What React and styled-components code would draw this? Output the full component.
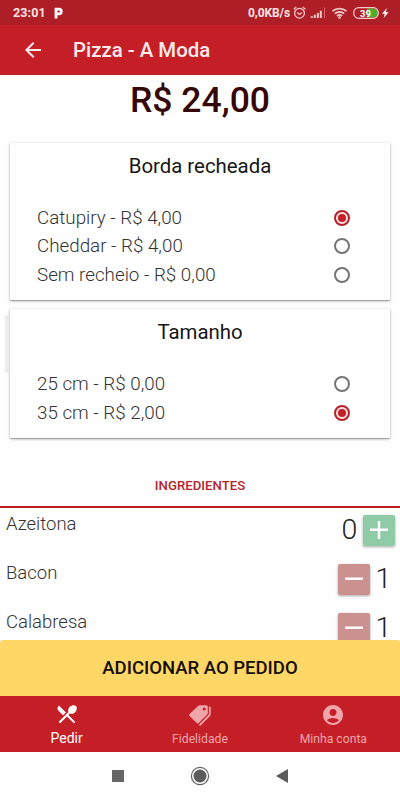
import styled, { createGlobalStyle } from "styled-components";
import { MdAccountCircle, MdArrowBack, MdLocalDining } from "react-icons/md";

const GlobalStyle = createGlobalStyle`
	* {
		box-sizing: border-box;
	}

	body {
		margin: 0;
		background-color: #fefefe;
		font-family: Roboto, "Liberation Sans", sans-serif;
	}

	h1, h2, p {
		margin: 0;
	}

	button {
		border: none;
		padding: 0;
		font-family: inherit;
	}
`;

const Container = styled.div`
	width: 400px;
	height: 800px;
	display: flex;
	flex-direction: column;
	overflow: hidden;
	background-color: #fefefe;
`;

const StatusBar = styled.div`
	height: 25px;
	flex-shrink: 0;
	display: flex;
	align-items: center;
	padding: 0 10px 0 13px;
	background-color: #ae1e26;
	color: #fbe3e3;
`;

const Clock = styled.span`
	width: 41px;
	font-size: 12.5px;
	font-weight: 700;
	letter-spacing: 0.1px;
`;

const Speed = styled.span`
	margin-left: auto;
	margin-right: 3px;
	font-size: 12px;
	font-weight: 700;
	letter-spacing: -0.1px;
`;

const StatusIcons = styled.div`
	width: 97px;
	height: 16px;
	display: flex;
`;

const Header = styled.header`
	height: 50px;
	flex-shrink: 0;
	display: flex;
	align-items: center;
	padding-left: 21px;
	background-color: #c41f27;
	color: #fcebeb;
`;

const Title = styled.h1`
	margin-left: 28px;
	font-size: 20.4px;
	font-weight: 500;
`;

const Content = styled.main`
	flex: 1;
	min-height: 0;
	overflow: hidden;
	display: flex;
	flex-direction: column;
`;

const Price = styled.p`
	height: 68px;
	flex-shrink: 0;
	padding-top: 4px;
	text-align: center;
	font-size: 35.5px;
	line-height: 42px;
	font-weight: 500;
	color: #350606;
`;

const Card = styled.section`
	position: relative;
	height: ${(props) => props.$height}px;
	flex-shrink: 0;
	margin: 0 10px 9px;
	padding: ${(props) => props.$top}px 40px 0 27px;
	border-radius: 1px;
	background-color: #fff;
	box-shadow: 0 1px 3px rgba(0, 0, 0, 0.35), 0 1px 1px rgba(0, 0, 0, 0.18);
`;

const Peek = styled.div`
	position: absolute;
	left: -5px;
	top: 6px;
	width: 4px;
	height: 58px;
	background-color: #ececec;
`;

const CardTitle = styled.h2`
	height: 52px;
	margin-right: -13px;
	text-align: center;
	font-size: 20.4px;
	line-height: 29px;
	font-weight: 400;
	color: #161616;
`;

const Option = styled.label`
	height: 28.5px;
	display: flex;
	align-items: center;
	justify-content: space-between;
	font-size: 18.8px;
	font-weight: 300;
	color: #333;
`;

const Radio = styled.span`
	width: 16px;
	height: 16px;
	display: flex;
	align-items: center;
	justify-content: center;
	border: 2px solid ${(props) => (props.$checked ? "#b5202b" : "#757575")};
	border-radius: 50%;
	background-color: ${(props) => (props.$checked ? "#fbe4e0" : "transparent")};

	&::after {
		content: "";
		width: 8px;
		height: 8px;
		border-radius: 50%;
		background-color: ${(props) => (props.$checked ? "#c41f2b" : "transparent")};
	}
`;

const Tab = styled.div`
	height: 61px;
	flex-shrink: 0;
	display: flex;
	justify-content: center;
	padding-top: 30px;
	border-bottom: 2px solid #bd1c25;
	font-size: 13.2px;
	line-height: 17px;
	font-weight: 500;
	color: #b8242d;
`;

const Ingredient = styled.div`
	height: 49px;
	flex-shrink: 0;
	display: flex;
	justify-content: space-between;
	padding: 6px 5px 0 6px;
`;

const Name = styled.span`
	font-size: 18.5px;
	line-height: 20px;
	font-weight: 300;
	color: #333;
`;

const Counter = styled.div`
	height: 32px;
	display: flex;
	align-items: center;
`;

const Amount = styled.span`
	width: 25px;
	margin-right: ${(props) => (props.$before ? "1px" : 0)};
	padding-left: ${(props) => (props.$before ? 0 : "2px")};
	text-align: center;
	font-size: 28.5px;
	line-height: 32px;
	font-weight: 300;
	color: #222;
`;

const Step = styled.button`
	width: 32px;
	height: 31px;
	display: flex;
	align-items: center;
	justify-content: center;
	border-radius: 2px;
	background-color: ${(props) => (props.$add ? "#90cba8" : "#cb9090")};
	box-shadow: 0 1px 3px rgba(0, 0, 0, 0.35);
`;

const AddButton = styled.button`
	height: 56px;
	flex-shrink: 0;
	border-radius: 3px 3px 0 0;
	background-color: #fed766;
	font-size: 18.5px;
	font-weight: 500;
	color: #120d05;
`;

const BottomNav = styled.nav`
	height: 56px;
	flex-shrink: 0;
	display: flex;
	background-color: #c41f27;
`;

const NavItem = styled.div`
	flex: 1;
	display: flex;
	flex-direction: column;
	align-items: center;
	padding-top: ${(props) => (props.$active ? "6px" : "7px")};
	font-size: ${(props) => (props.$active ? "14px" : "12.2px")};
	line-height: 16px;
	color: ${(props) => (props.$active ? "#fff" : "#f0a5aa")};

	svg {
		flex-shrink: 0;
		margin-bottom: 4px;
	}
`;

const SystemNav = styled.div`
	height: 48px;
	flex-shrink: 0;
	display: flex;
	align-items: center;
	justify-content: center;
	gap: 66px;
	padding-right: 1px;
	background-color: #fefefe;
`;

const crusts = [
	{ label: "Catupiry - R$ 4,00", checked: true },
	{ label: "Cheddar - R$ 4,00", checked: false },
	{ label: "Sem recheio - R$ 0,00", checked: false },
];

const sizes = [
	{ label: "25 cm - R$ 0,00", checked: false },
	{ label: "35 cm - R$ 2,00", checked: true },
];

const ingredients = [
	{ name: "Azeitona", amount: 0 },
	{ name: "Bacon", amount: 1 },
	{ name: "Calabresa", amount: 1 },
];

const Options = ({ items }) =>
	items.map((item) => (
		<Option key={item.label}>
			{item.label}
			<Radio $checked={item.checked} />
		</Option>
	));

const StepIcon = ({ add }) => (
	<svg width="18" height="18" viewBox="0 0 18 18" stroke="#fff" strokeWidth="2.4">
		<path d={add ? "M0 8.7h18M9 0v18" : "M0 8.7h18"} />
	</svg>
);

const TagsIcon = () => (
	<svg width="24" height="24" viewBox="0 0 24 24">
		<path
			d="M11.8 2.2h6.4a1.6 1.6 0 0 1 1.6 1.6v6.3a2 2 0 0 1-.6 1.4l-8.4 8.6a1.5 1.5 0 0 1-2.1 0L1.6 13a1.5 1.5 0 0 1 0-2.1l8.7-8.1a2.3 2.3 0 0 1 1.5-.6z"
			fill="currentColor"
		/>
		<circle cx="16.2" cy="6" r="1.6" fill="#c41f27" />
		<path
			d="M21.8 4.4v6.7a2 2 0 0 1-.6 1.4L12 21.8"
			fill="none"
			stroke="currentColor"
			strokeWidth="1.8"
			strokeLinecap="round"
		/>
	</svg>
);

const App = () => {
	return (
		<>
			<GlobalStyle />
			<Container>
				<StatusBar>
					<Clock>23:01</Clock>
					<svg width="9" height="12" viewBox="0 0 9 12" fill="none">
						<path
							d="M2 11.5V2.2h3a2.2 2.2 0 0 1 0 4.6H2"
							stroke="#fff"
							strokeWidth="2.8"
						/>
					</svg>
					<Speed>0,0KB/s</Speed>
					<StatusIcons>
						<svg width="97" height="16" viewBox="0 0 97 16" fill="none" stroke="#f6c9cb">
							<circle cx="6.5" cy="8.2" r="4.9" strokeWidth="1.3" />
							<path d="M.7 4.2 3.3 2M12.3 4.2 9.7 2M4.2 7.4l2.3 2 2.3-2" strokeWidth="1.3" />
							<path d="M18.8 13v-1.8M21.8 13v-3.3M24.8 13V8M27.8 13V5.7" strokeWidth="2" />
							<path d="M31.5 13V2.5" stroke="#d66c72" strokeWidth="1" />
							<path
								d="M39.5 6.2a10.5 10.5 0 0 1 14 0M41.8 8.7a7 7 0 0 1 9.4 0M44 11a3.6 3.6 0 0 1 5 0"
								strokeWidth="1.8"
							/>
							<circle cx="46.5" cy="12.6" r="1.3" fill="#f6c9cb" stroke="none" />
							<path d="M74 3.5h6.5a4 4 0 0 1 0 9H74z" fill="#4fae2b" stroke="none" />
							<rect x="60.7" y="2.7" width="24.6" height="10.6" rx="5" strokeWidth="1.2" />
							<text
								x="72.5"
								y="11.6"
								fill="#fff"
								stroke="none"
								fontSize="9.5"
								fontWeight="700"
								textAnchor="middle"
							>
								39
							</text>
							<path d="m94 3-5 5.8h2.8L90.6 13l5-5.8h-2.9z" fill="#fff" stroke="none" />
						</svg>
					</StatusIcons>
				</StatusBar>
				<Header>
					<MdArrowBack size={24} />
					<Title>Pizza - A Moda</Title>
				</Header>
				<Content>
					<Price>R$ 24,00</Price>
					<Card $height={157} $top={8.5}>
						<CardTitle>Borda recheada</CardTitle>
						<Options items={crusts} />
					</Card>
					<Card $height={129} $top={9}>
						<Peek />
						<CardTitle>Tamanho</CardTitle>
						<Options items={sizes} />
					</Card>
					<Tab>INGREDIENTES</Tab>
					{ingredients.map((item) => (
						<Ingredient key={item.name}>
							<Name>{item.name}</Name>
							{item.amount === 0 ? (
								<Counter>
									<Amount $before>{item.amount}</Amount>
									<Step $add>
										<StepIcon add />
									</Step>
								</Counter>
							) : (
								<Counter>
									<Step>
										<StepIcon />
									</Step>
									<Amount>{item.amount}</Amount>
								</Counter>
							)}
						</Ingredient>
					))}
				</Content>
				<AddButton>ADICIONAR AO PEDIDO</AddButton>
				<BottomNav>
					<NavItem $active>
						<MdLocalDining size={24} />
						Pedir
					</NavItem>
					<NavItem>
						<TagsIcon />
						Fidelidade
					</NavItem>
					<NavItem>
						<MdAccountCircle size={24} />
						Minha conta
					</NavItem>
				</BottomNav>
				<SystemNav>
					<svg width="12" height="12" viewBox="0 0 12 12" fill="#666">
						<rect width="12" height="12" />
					</svg>
					<svg width="20" height="20" viewBox="0 0 20 20" fill="#5c5c5c">
						<circle cx="10" cy="10" r="8.6" fill="none" stroke="#666" strokeWidth="1.2" />
						<circle cx="10" cy="10" r="6.5" />
					</svg>
					<svg width="12" height="14" viewBox="0 0 12 14" fill="#5c5c5c">
						<path d="M0 7 12 0v14z" />
					</svg>
				</SystemNav>
			</Container>
		</>
	);
};

export default App;
